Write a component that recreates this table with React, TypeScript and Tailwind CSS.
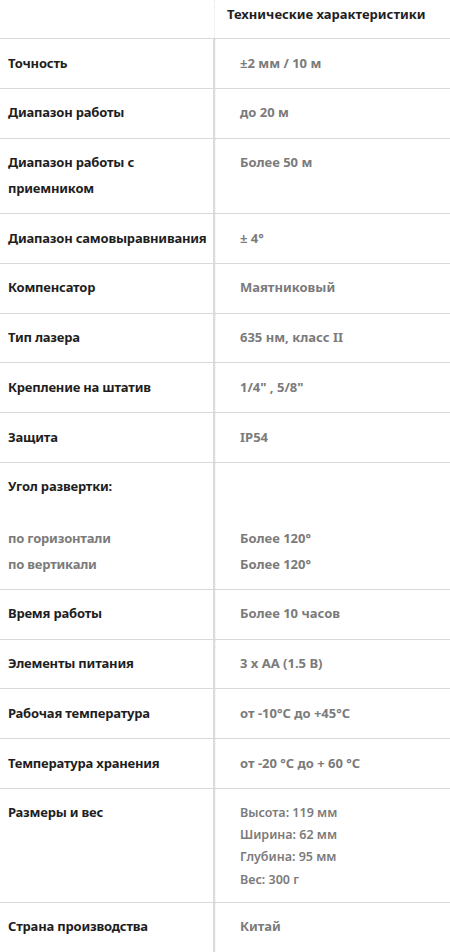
import React from 'react';

type Spec = {
  label: React.ReactNode;
  value: React.ReactNode;
  small?: boolean;
};

const specs: Spec[] = [
  { label: 'Точность', value: '±2 мм / 10 м' },
  { label: 'Диапазон работы', value: 'до 20 м' },
  { label: <>Диапазон работы с<br />приемником</>, value: 'Более 50 м' },
  { label: 'Диапазон самовыравнивания', value: '± 4°' },
  { label: 'Компенсатор', value: 'Маятниковый' },
  { label: 'Тип лазера', value: '635 нм, класс II' },
  { label: 'Крепление на штатив', value: '1/4" , 5/8"' },
  { label: 'Защита', value: 'IP54' },
  {
    label: (
      <>
        Угол развертки:
        <br />
        <br />
        <span className="text-[#7b7b7b]">по горизонтали</span>
        <br />
        <span className="text-[#7b7b7b]">по вертикали</span>
      </>
    ),
    value: (
      <>
        <br />
        <br />
        Более 120°
        <br />
        Более 120°
      </>
    ),
  },
  { label: 'Время работы', value: 'Более 10 часов' },
  { label: 'Элементы питания', value: '3 x AA (1.5 В)' },
  { label: 'Рабочая температура', value: 'от -10°C до +45°C' },
  { label: 'Температура хранения', value: 'от -20 °C до + 60 °C' },
  {
    label: 'Размеры и вес',
    value: (
      <>
        Высота: 119 мм
        <br />
        Ширина: 62 мм
        <br />
        Глубина: 95 мм
        <br />
        Вес: 300 г
      </>
    ),
    small: true,
  },
  { label: 'Страна производства', value: 'Китай' },
];

export default function App() {
  return (
    <div className="w-[450px] h-[952px] overflow-hidden bg-white font-['Noto_Sans',sans-serif] text-[13px] font-bold">
      {/* Header */}
      <div className="grid grid-cols-[215px_1fr] h-[39px] border-b border-[#d9d9d9]">
        <div className="border-r border-dotted border-[#e4e4e4]" />
        <div className="pl-[12px] pt-[2px] leading-[25.75px] text-[#1e1e1e]">
          Технические характеристики
        </div>
      </div>

      {/* Rows */}
      {specs.map((spec, i) => (
        <div key={i} className="grid grid-cols-[215px_1fr] border-b border-[#d9d9d9]">
          <div className="pl-2 py-[11.5px] leading-[25.75px] tracking-[-0.2px] whitespace-nowrap text-[#1e1e1e] border-r-2 border-[#dcdcdc]">
            {spec.label}
          </div>
          <div
            className={
              spec.small
                ? 'pl-[24px] pt-[13px] pb-[11px] leading-[22.25px] text-[12.5px] font-semibold text-[#7b7b7b] border-l border-dotted border-[#ececec]'
                : 'pl-[24px] py-[11.5px] leading-[25.75px] text-[#7b7b7b] border-l border-dotted border-[#ececec]'
            }
          >
            {spec.value}
          </div>
        </div>
      ))}
    </div>
  );
}
